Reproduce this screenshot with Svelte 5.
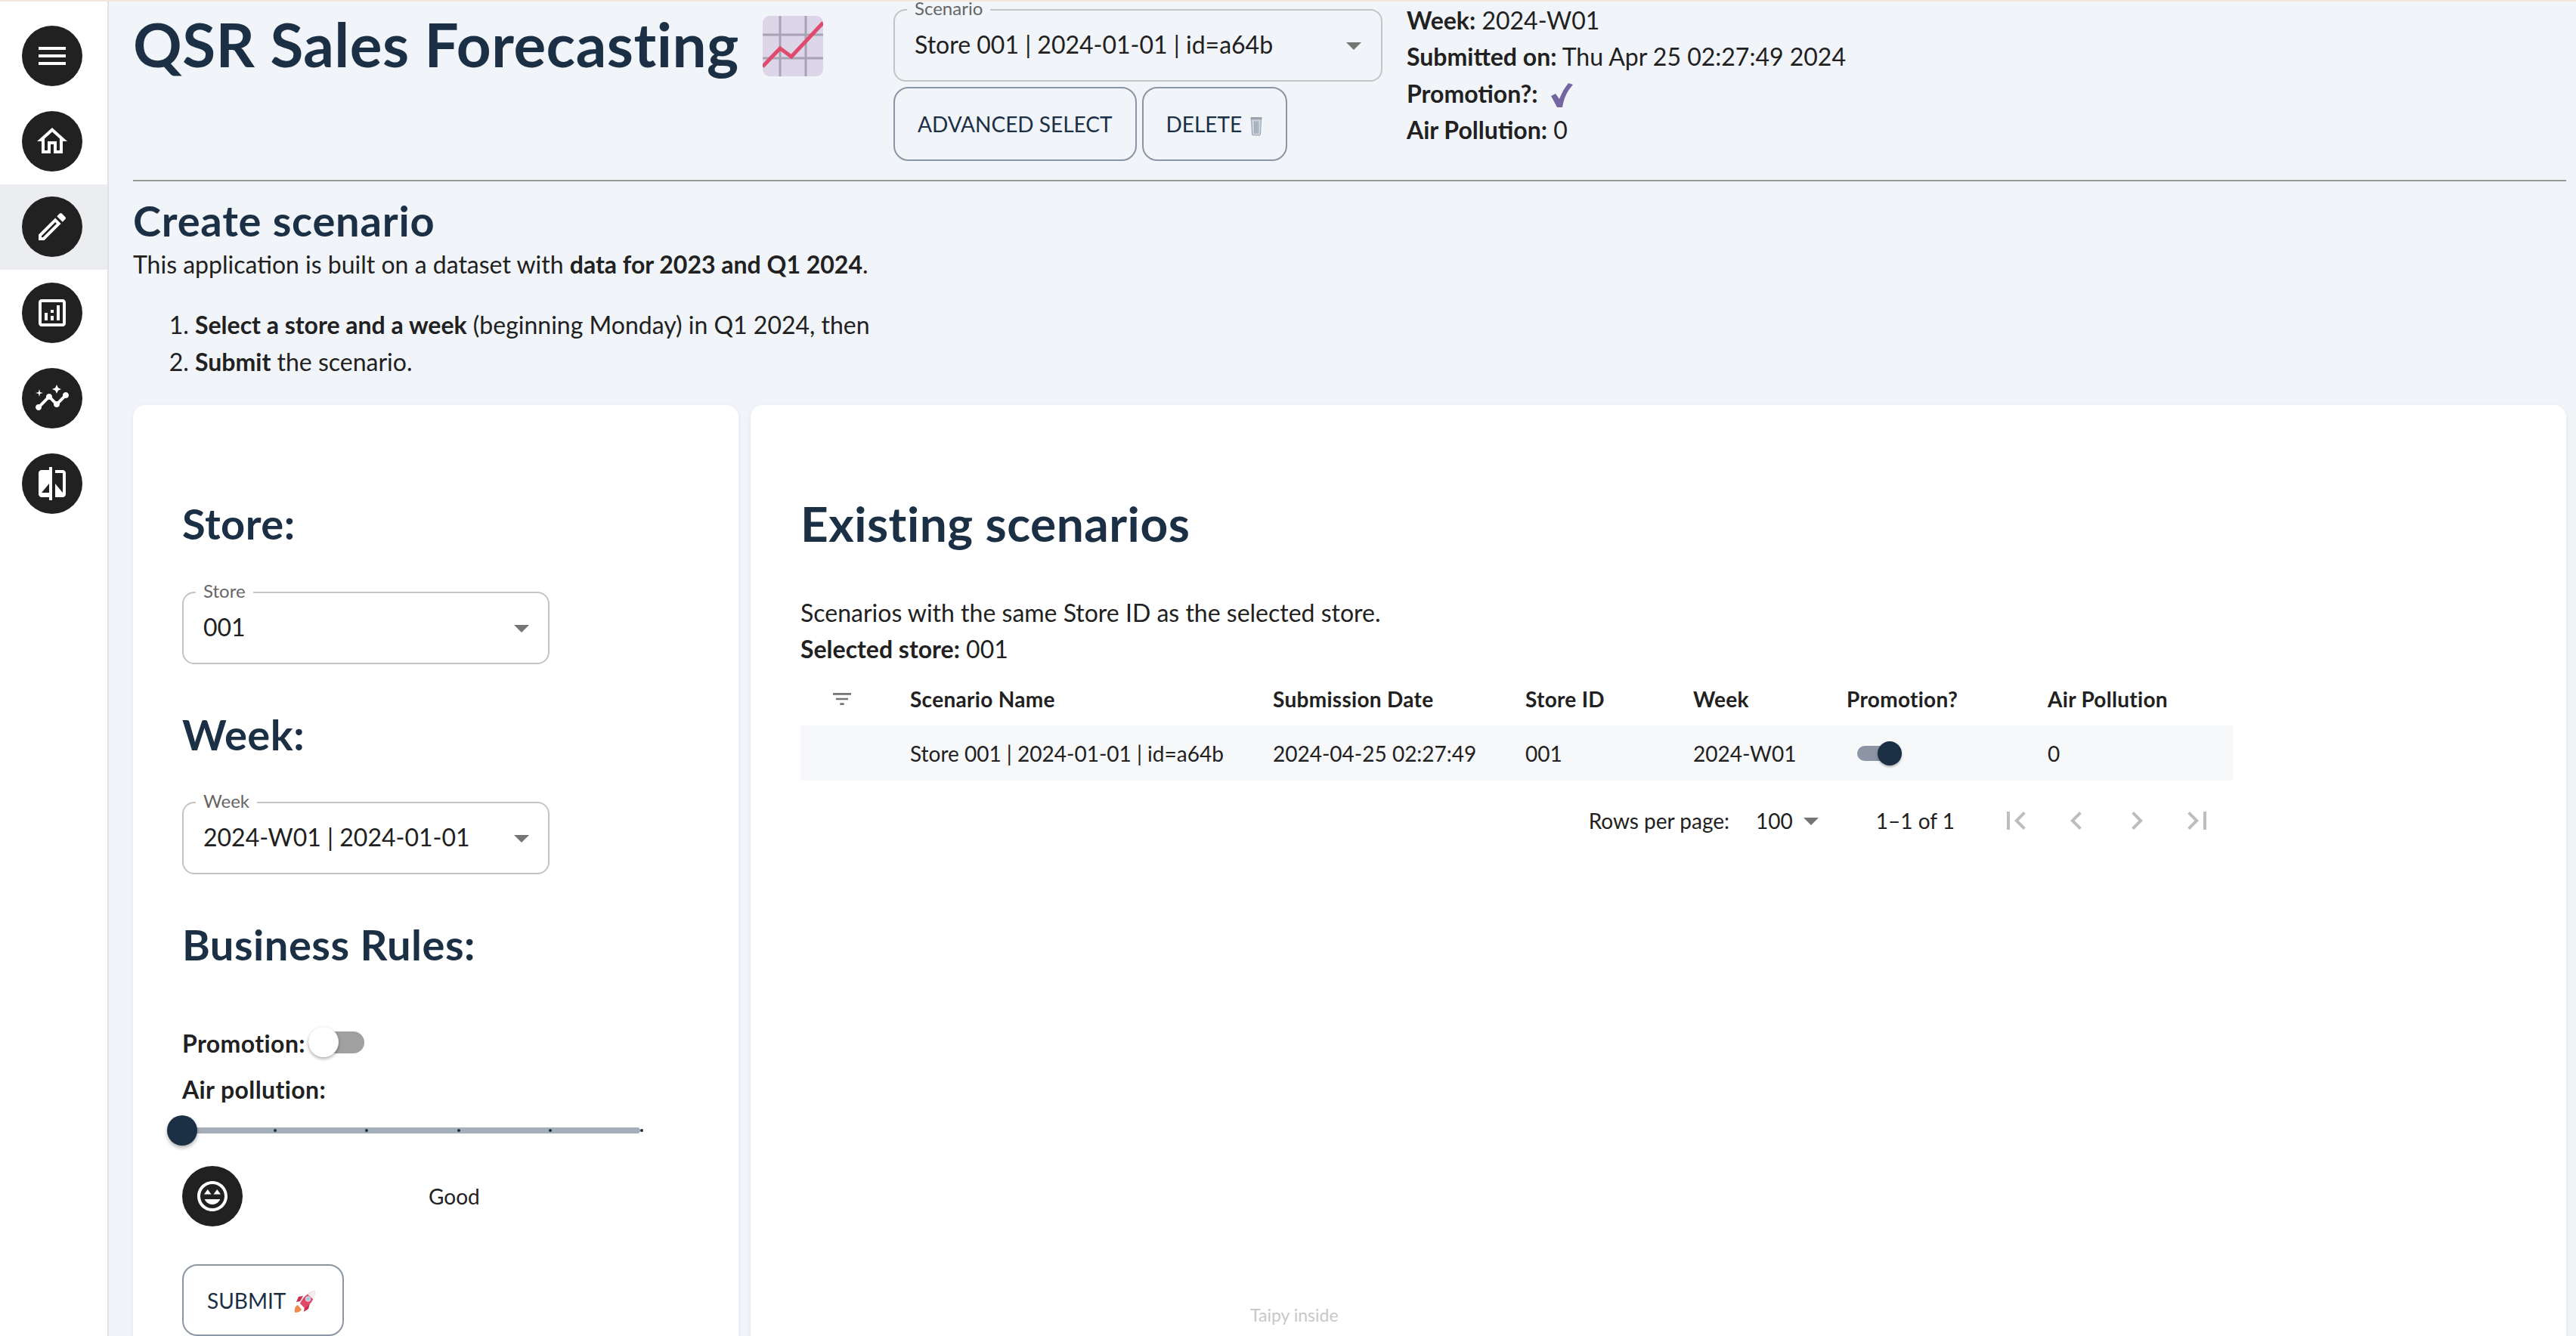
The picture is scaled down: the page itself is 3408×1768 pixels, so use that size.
<script lang="ts">
  const nav = [
    { d: "M3 18h18v-2H3v2zm0-5h18v-2H3v2zm0-7v2h18V6H3z" },
    { d: "M12 5.69l5 4.5V18h-2v-6H9v6H7v-7.81l5-4.5M12 3L2 12h3v8h6v-6h2v6h6v-8h3L12 3z" },
    { d: "M14.06 9.02l.92.92L5.92 19H5v-.92l9.06-9.06M17.66 3c-.25 0-.51.1-.7.29l-1.83 1.83 3.75 3.75 1.83-1.83c.39-.39.39-1.02 0-1.41l-2.34-2.34c-.2-.2-.45-.29-.71-.29zm-3.6 3.19L3 17.25V21h3.75L17.81 9.94l-3.75-3.75z", active: true },
    { d: "M19 3H5c-1.1 0-2 .9-2 2v14c0 1.1.9 2 2 2h14c1.1 0 2-.9 2-2V5c0-1.1-.9-2-2-2zm0 16H5V5h14v14zM7 12h2v5H7zm8-5h2v10h-2zm-4 7h2v3h-2zm0-4h2v2h-2z" },
    { d: "M21 8c-1.45 0-2.26 1.44-1.93 2.51l-3.55 3.56c-.3-.09-.74-.09-1.04 0l-2.55-2.55C12.27 10.45 11.46 9 10 9c-1.45 0-2.27 1.44-1.93 2.52l-4.56 4.55C2.44 15.74 1 16.55 1 18c0 1.1.9 2 2 2 1.45 0 2.26-1.44 1.93-2.51l4.55-4.56c.3.09.74.09 1.04 0l2.55 2.55C12.73 16.55 13.54 18 15 18c1.45 0 2.27-1.44 1.93-2.52l3.56-3.55c1.07.33 2.51-.48 2.51-1.93 0-1.1-.9-2-2-2zM15 9l.94-2.07L18 6l-2.06-.93L15 3l-.92 2.07L12 6l2.08.93zM3.5 11 4 9l2-.5L4 8l-.5-2L3 8l-2 .5L3 9z" },
    { d: "M10 3H5c-1.1 0-2 .9-2 2v14c0 1.1.9 2 2 2h5v2h2V1h-2v2zm0 15H5l5-6v6zm9-15h-5v2h5v13l-5-6v9h5c1.1 0 2-.9 2-2V5c0-1.1-.9-2-2-2z" },
  ];
  const columns = ["Scenario Name", "Submission Date", "Store ID", "Week", "Promotion?", "Air Pollution"];
  const pager = [
    "M18.41 16.59L13.82 12l4.59-4.59L17 6l-6 6 6 6zM6 6h2v12H6z",
    "M15.41 7.41L14 6l-6 6 6 6 1.41-1.41L10.83 12z",
    "M10 6L8.59 7.41 13.17 12l-4.58 4.59L10 18l6-6z",
    "M5.59 7.41L10.18 12l-4.59 4.59L7 18l6-6-6-6zM16 6h2v12h-2z",
  ];
  const ticks = [0, 1, 2, 3, 4, 5];
</script>

{#snippet arrow()}
  <svg class="arrow" viewBox="0 0 24 24"><path d="M7 10l5 5 5-5z" /></svg>
{/snippet}

<div class="app">
  <nav class="sidebar">
    {#each nav as item}
      <div class="nav-item" class:active={item.active}>
        <span class="round"><svg viewBox="0 0 24 24"><path d={item.d} /></svg></span>
      </div>
    {/each}
  </nav>

  <main class="main">
    <header class="top">
      <h1>QSR Sales Forecasting
        <svg class="chart" viewBox="0 0 80 80">
          <rect width="80" height="80" rx="9" fill="#dcd6e8" />
          <path d="M23 0v80M57 0v80M0 25h80M0 56h80" stroke="#a8a3b4" stroke-width="3" />
          <path d="M0 67 23 43 38 54 80 9" stroke="#df4a6d" stroke-width="5" fill="none" />
        </svg>
      </h1>
      <div class="scenario">
        <div class="select on-bg">
          <span class="float">Scenario</span>
          <span>Store 001 | 2024-01-01 | id=a64b</span>
          {@render arrow()}
        </div>
        <div class="actions">
          <button type="button" class="btn">Advanced select</button>
          <button type="button" class="btn">Delete
            <svg class="trash" viewBox="0 0 16 24">
              <path d="M2 3h12l-1 19a1.500 1.500 0 0 1-1.500 1h-7A1.500 1.500 0 0 1 3 22z" fill="#c9d4e0" stroke="#9aa2ac" />
              <path d="M6 6v15M8 6v15M10 6v15" stroke="#8a94a0" />
              <rect x="1" y="1" width="14" height="3" rx="1" fill="#9aa2ac" />
            </svg>
          </button>
        </div>
      </div>
      <div class="info">
        <div><b>Week:</b> 2024-W01</div>
        <div><b>Submitted on:</b> Thu Apr 25 02:27:49 2024</div>
        <div class="promo"><b>Promotion?:</b>
          <svg class="check" viewBox="0 0 32 32"><path d="M3 17l6-3 5 7C17 13 21 6 26 0l6 2c-8 9-12 18-14 30h-7z" fill="#7566a0" /></svg>
        </div>
        <div><b>Air Pollution:</b> 0</div>
      </div>
    </header>
    <hr />

    <h2>Create scenario</h2>
    <p>This application is built on a dataset with <b>data for 2023 and Q1 2024</b>.</p>
    <ol>
      <li><b>Select a store and a week</b> (beginning Monday) in Q1 2024, then</li>
      <li><b>Submit</b> the scenario.</li>
    </ol>

    <div class="cards">
      <section class="card form">
        <h3 class="store-head">Store:</h3>
        <div class="select field">
          <span class="float">Store</span>
          <span>001</span>
          {@render arrow()}
        </div>
        <h3 class="week-head">Week:</h3>
        <div class="select field">
          <span class="float">Week</span>
          <span>2024-W01 | 2024-01-01</span>
          {@render arrow()}
        </div>
        <h3 class="rules-head">Business Rules:</h3>
        <div class="promotion">
          <b>Promotion:</b>
          <span class="switch"><span class="thumb"></span></span>
        </div>
        <div class="air"><b>Air pollution:</b></div>
        <div class="slider">
          <span class="track"></span>
          {#each ticks as t}
            <span class="tick" style="left: {t * 121.2}px"></span>
          {/each}
          <span class="knob"></span>
        </div>
        <div class="mood">
          <span class="round"><svg viewBox="0 0 24 24"><path d="M11.99 2C6.47 2 2 6.47 2 12s4.47 10 9.99 10S22 17.53 22 12 17.52 2 11.99 2zM12 20c-4.42 0-8-3.58-8-8s3.58-8 8-8 8 3.58 8 8-3.58 8-8 8zm0-2.500c2.330 0 4.320-1.450 5.120-3.500H6.880c.8 2.050 2.790 3.500 5.120 3.500zM8.880 7.500 6.500 10.800h4.760zM15.120 7.500 12.740 10.800h4.760z" /></svg></span>
          <span class="mood-text">Good</span>
        </div>
        <button type="button" class="btn submit">Submit
          <svg class="rocket" viewBox="0 0 28 30">
            <path d="M1 29c-1-5 1-9 4-10l5 6c-2 3-5 4-9 4z" fill="#ec8a4f" />
            <path d="M8 14 3 15l3-7 6-1zM14 21l-1 7 6-4 2-7z" fill="#c7304f" />
            <path d="M28 0c-9 2-16 8-20 17l6 6c9-5 13-13 14-23z" fill="#e04a68" />
            <path d="M28 0c-4 1-7 2-10 5l8 7c1-4 2-8 2-12z" fill="#f3eef0" />
            <circle cx="18.500" cy="11" r="3.200" fill="#a8c4e6" stroke="#e8e4ea" />
          </svg>
        </button>
      </section>

      <section class="card list">
        <h3 class="list-head">Existing scenarios</h3>
        <div class="intro">Scenarios with the same Store ID as the selected store.</div>
        <div><b>Selected store:</b> 001</div>
        <div class="table">
          <div class="grid head">
            <svg class="filter" viewBox="0 0 24 24"><path d="M10 18h4v-2h-4v2zM3 6v2h18V6H3zm3 7h12v-2H6v2z" /></svg>
            {#each columns as col}
              <span>{col}</span>
            {/each}
          </div>
          <div class="grid row">
            <span></span>
            <span>Store 001 | 2024-01-01 | id=a64b</span>
            <span>2024-04-25 02:27:49</span>
            <span>001</span>
            <span>2024-W01</span>
            <span class="mini"><span class="mini-thumb"></span></span>
            <span>0</span>
          </div>
          <div class="pager">
            <span>Rows per page:</span>
            <span class="rows">100 {@render arrow()}</span>
            <span class="range">1–1 of 1</span>
            {#each pager as d}
              <span class="page-btn"><svg viewBox="0 0 24 24"><path d={d} /></svg></span>
            {/each}
          </div>
        </div>
      </section>
    </div>
  </main>
  <span class="inside">Taipy inside</span>
</div>

<style>
  :global(body) {
    margin: 0;
    font-family: "Lato", "Liberation Sans", sans-serif;
    font-size: 32px;
    line-height: 48px;
    color: #212121;
  }

  .app {
    position: relative;
    display: flex;
    height: 1766px;
    overflow: hidden;
    border-top: 2px solid #f3e6dc;
    background: #f1f4f8;
  }

  .sidebar {
    flex: none;
    box-sizing: border-box;
    width: 144px;
    padding-top: 15px;
    background: #fff;
    border-right: 2px solid #e0e2e5;
  }

  .nav-item {
    display: flex;
    align-items: center;
    justify-content: center;
    height: 113.33px;
    padding-right: 5px;
  }

  .nav-item.active {
    background: #ecedf0;
  }

  .round {
    display: flex;
    align-items: center;
    justify-content: center;
    width: 80px;
    height: 80px;
    border-radius: 50%;
    background: #212121;
  }

  .round svg {
    width: 48px;
    height: 48px;
    fill: #fff;
  }

  .main {
    flex: 1;
    min-width: 0;
    padding: 0 13px 0 32px;
  }

  .top {
    display: flex;
    height: 236px;
  }

  h1 {
    width: 1006px;
    flex: none;
    margin: 0;
    font-size: 80px;
    line-height: 113px;
    font-weight: 700;
    letter-spacing: 0.5px;
    color: #1b2f45;
    white-space: nowrap;
  }

  .chart {
    width: 80px;
    height: 80px;
    margin-left: 11px;
    vertical-align: -12px;
  }

  .scenario {
    width: 680px;
    flex: none;
    padding-top: 10px;
  }

  .select {
    position: relative;
    box-sizing: border-box;
    display: flex;
    align-items: center;
    justify-content: space-between;
    height: 96px;
    padding: 0 10px 0 26px;
    border: 2px solid #c4c4c4;
    border-radius: 16px;
    background: #fff;
  }

  .select > span:not(.float) {
    margin-top: -2px;
  }

  .select.on-bg {
    width: 647px;
    padding-right: 12px;
    background: transparent;
  }

  .select.field {
    width: 486px;
    padding-right: 11px;
  }

  .float {
    position: absolute;
    top: -13px;
    left: 16px;
    padding: 0 10px;
    font-size: 24px;
    line-height: 20px;
    color: #666;
    background: #fff;
  }

  .on-bg .float {
    background: #f1f4f8;
  }

  .arrow {
    width: 48px;
    height: 48px;
    fill: #757575;
  }

  .actions {
    display: flex;
    gap: 7px;
    margin-top: 7px;
  }

  .btn {
    box-sizing: border-box;
    height: 98px;
    padding: 0 30px;
    border: 2px solid #8b95a3;
    border-radius: 20px;
    background: transparent;
    font: inherit;
    font-size: 28px;
    color: #1b2f45;
    text-transform: uppercase;
  }

  .trash {
    width: 18px;
    height: 26px;
    margin-left: 3px;
    vertical-align: -5px;
  }

  .info {
    margin-left: -1px;
    padding-top: 1px;
    line-height: 48.4px;
    white-space: nowrap;
  }

  .check {
    width: 32px;
    height: 32px;
    margin-left: 6px;
    vertical-align: -6px;
  }

  hr {
    height: 2px;
    margin: 0;
    border: none;
    background: #999;
  }

  h2 {
    margin: 16px 0 0;
    font-size: 56px;
    line-height: 72px;
    font-weight: 700;
    letter-spacing: 0.8px;
    color: #1b2f45;
  }

  p {
    margin: 0;
    margin-top: -2px;
  }

  ol {
    margin: 31px 0 0;
    padding-left: 82px;
    line-height: 49px;
  }

  .cards {
    display: flex;
    gap: 16px;
    margin-top: 33px;
    height: 1300px;
  }

  .card {
    background: #fff;
    border-radius: 16px;
    box-shadow: 0 2px 6px rgba(0, 0, 0, 0.07);
  }

  .form {
    box-sizing: border-box;
    width: 801px;
    flex: none;
    padding: 121px 0 0 65px;
  }

  .list {
    flex: 1;
    min-width: 0;
    padding: 121px 0 0 66px;
  }

  h3 {
    margin: 0;
    font-size: 56px;
    line-height: 72px;
    font-weight: 700;
    letter-spacing: 0.5px;
    color: #1b2f45;
  }

  .store-head {
    margin-bottom: 54px;
  }

  .week-head {
    margin: 57px 0 53px;
  }

  .rules-head {
    margin: 57px 0 71px;
  }

  .promotion {
    display: flex;
    align-items: center;
  }

  .promotion b,
  .air b {
    letter-spacing: 0.4px;
  }

  .switch {
    position: relative;
    width: 74px;
    height: 29px;
    margin: -4px 0 0 4px;
    border-radius: 15px;
    background: #a0a0a0;
  }

  .thumb {
    position: absolute;
    left: 0;
    top: -6px;
    width: 40px;
    height: 40px;
    border-radius: 50%;
    background: #fff;
    box-shadow: 0 2px 4px rgba(0, 0, 0, 0.35);
  }

  .air {
    margin-top: 13px;
  }

  .slider {
    position: relative;
    width: 606px;
    height: 40px;
    margin-top: 10px;
  }

  .track {
    position: absolute;
    top: 16px;
    left: 0;
    right: 0;
    height: 8px;
    border-radius: 4px;
    background: #a5afb9;
  }

  .tick {
    position: absolute;
    top: 18px;
    width: 4px;
    height: 4px;
    border-radius: 50%;
    background: #1b2f45;
  }

  .knob {
    position: absolute;
    top: 0;
    left: -20px;
    width: 40px;
    height: 40px;
    border-radius: 50%;
    background: #1b2f45;
    box-shadow: 0 3px 5px rgba(0, 0, 0, 0.3);
  }

  .mood {
    display: flex;
    align-items: center;
    margin-top: 27px;
  }

  .mood-text {
    margin-left: 246px;
    font-size: 28px;
  }

  .submit {
    display: block;
    width: 214px;
    height: 95px;
    margin-top: 50px;
    padding: 0 0 0 31px;
    text-align: left;
    white-space: nowrap;
  }

  .rocket {
    width: 28px;
    height: 30px;
    margin-left: 4px;
    vertical-align: -6px;
  }

  .list-head {
    font-size: 64px;
    margin-bottom: 58px;
  }

  .table {
    width: 1895px;
    margin-top: 6px;
    font-size: 28px;
  }

  .grid {
    display: grid;
    grid-template-columns: 145px 480px 334px 222px 203px 266px 245px;
    align-items: center;
  }

  .head {
    height: 71px;
    font-weight: 700;
    letter-spacing: 0.3px;
  }

  .filter {
    width: 32px;
    height: 32px;
    margin-left: 39px;
    fill: #757575;
  }

  .row {
    height: 73px;
    background: #f6f8fa;
  }

  .mini {
    position: relative;
    display: block;
    width: 48px;
    height: 20px;
    margin-left: 14px;
    border-radius: 10px;
    background: #8b95a3;
  }

  .mini-thumb {
    position: absolute;
    top: -6px;
    right: -11px;
    width: 32px;
    height: 32px;
    border-radius: 50%;
    background: #1b2f45;
    box-shadow: 0 2px 3px rgba(0, 0, 0, 0.3);
  }

  .pager {
    display: flex;
    align-items: center;
    justify-content: flex-end;
    height: 106px;
    padding-right: 7px;
  }

  .rows {
    display: flex;
    align-items: center;
    margin-left: 35px;
  }

  .range {
    margin: 0 41px 0 62px;
  }

  .page-btn {
    display: flex;
    align-items: center;
    justify-content: center;
    width: 80px;
    height: 80px;
  }

  .page-btn svg {
    width: 48px;
    height: 48px;
    fill: rgba(0, 0, 0, 0.26);
  }

  .inside {
    position: absolute;
    left: 1654px;
    top: 1722px;
    font-size: 23px;
    line-height: 32px;
    color: #c8c8c8;
  }
</style>
